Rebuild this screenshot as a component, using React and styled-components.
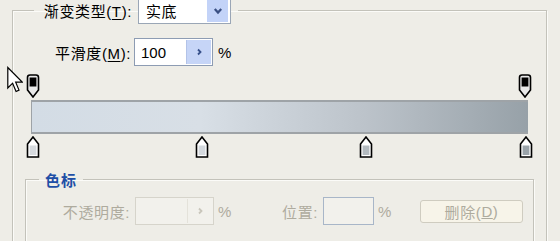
import styled, { createGlobalStyle } from "styled-components";

const Global = createGlobalStyle`
  html, body {
    margin: 0;
    padding: 0;
    background: #eeede7;
  }
  body {
    font-family: "Liberation Sans", "Noto Sans CJK SC", sans-serif;
    font-size: 15px;
    color: #000;
  }
`;

const Page = styled.div`
  position: relative;
  width: 560px;
  height: 241px;
  overflow: hidden;
  background: #eeede7;
`;

const Group = styled.fieldset`
  margin: ${(p) => p.$margin};
  padding: 0;
  min-width: 0;
  width: ${(p) => p.$width}px;
  height: ${(p) => p.$height}px;
  box-sizing: border-box;
  border: 1px solid #c3c2ba;
  box-shadow: inset 1px 1px 0 #fbfbf8, 1px 1px 0 #fbfbf8;
`;

const Legend = styled.legend`
  display: flex;
  align-items: center;
  gap: ${(p) => p.$gap || 0}px;
  margin-left: ${(p) => p.$offset}px;
  padding: 0 ${(p) => p.$pad}px;
  height: ${(p) => p.$h}px;
`;

const Label = styled.span`
  display: inline-block;
  width: ${(p) => (p.$width ? `${p.$width}px` : "auto")};
  margin-left: ${(p) => p.$ml || 0}px;
  text-align: right;
  font-size: 15px;
  letter-spacing: 0.6px;
  white-space: nowrap;
  color: ${(p) => (p.$disabled ? "#aeab9e" : "#000")};
  & u {
    text-decoration: underline;
    text-underline-offset: 2px;
  }
`;

const Title = styled.span`
  font-size: 15px;
  font-weight: 700;
  color: #1e4fa6;
  letter-spacing: 1px;
`;

const Select = styled.div`
  display: flex;
  align-items: center;
  justify-content: space-between;
  width: 93px;
  height: 27px;
  box-sizing: border-box;
  padding: 1px 2px 1px 7px;
  background: #fff;
  border: 1px solid #9aa6b6;
  letter-spacing: 0.6px;
`;

const SpinBox = styled.div`
  display: flex;
  align-items: stretch;
  width: ${(p) => p.$width}px;
  height: 28px;
  margin-left: ${(p) => p.$ml || 0}px;
  box-sizing: border-box;
  padding: 1px;
  background: ${(p) => (p.$disabled ? "#f2f1ec" : "#fff")};
  border: 1px solid ${(p) => p.$border || (p.$disabled ? "#d6d4cb" : "#8d9cb3")};
`;

const SpinValue = styled.span`
  flex: 1;
  display: flex;
  align-items: center;
  padding-left: 5px;
  font-size: 15px;
`;

const SpinButton = styled.span`
  display: flex;
  align-items: center;
  justify-content: center;
  width: 24px;
  background: ${(p) => (p.$disabled ? "#f2f1ec" : "#c6d5f7")};
  border-left: 1px solid ${(p) => (p.$disabled ? "#e4e2da" : "#b3c3e8")};
  color: ${(p) => (p.$disabled ? "#c9c6bb" : "#37508a")};
`;

const DropButton = styled.span`
  display: flex;
  align-items: center;
  justify-content: center;
  width: 21px;
  height: 23px;
  background: #c3d3f8;
  color: #3a4f82;
`;

const Row = styled.div`
  display: flex;
  align-items: center;
  margin: ${(p) => p.$margin};
`;

const Percent = styled.span`
  margin-left: ${(p) => p.$ml || 4}px;
  width: 14px;
  color: ${(p) => (p.$disabled ? "#aeab9e" : "#000")};
`;

const Editor = styled.div`
  display: flex;
  flex-direction: column;
  gap: 2px;
  margin: 8px 0 0 18px;
  width: 497px;
`;

const Track = styled.div`
  position: relative;
  height: ${(p) => p.$h}px;
`;

const StopHolder = styled.div`
  position: absolute;
  top: 0;
  width: 14px;
  height: 100%;
  margin-left: -7px;
`;

const Bar = styled.div`
  height: 34px;
  box-sizing: border-box;
  border: 1px solid #9ea3a7;
  border-top-width: 2px;
  border-bottom-width: 2px;
  border-right: none;
  background: linear-gradient(
    to right,
    #d3dce5 0%,
    #d8dfe6 34%,
    #bcc3ca 67%,
    #97a1a8 100%
  );
`;

const DeleteButton = styled.div`
  display: flex;
  align-items: center;
  justify-content: center;
  width: 103px;
  height: 23px;
  box-sizing: border-box;
  margin-left: 28px;
  background: #f7f4e9;
  border: 1px solid #cfccc0;
  border-radius: 3px;
  color: #aeab9e;
  letter-spacing: 0.6px;
`;

const Cursor = styled.svg`
  position: absolute;
  left: 7px;
  top: 66px;
`;

const TopStop = () => (
  <svg width="14" height="24" viewBox="0 0 14 24">
    <path
      d="M1.5 3.5 Q1.5 1 4 1 H10 Q12.5 1 12.5 3.5 V16 L7 23 L1.5 16 Z"
      fill="#e9e9e9"
      stroke="#000"
      strokeWidth="1.6"
    />
    <rect x="3.6" y="3.5" width="6.8" height="9" fill="#000" />
  </svg>
);

const BottomStop = ({ color }) => (
  <svg width="14" height="22" viewBox="0 0 14 22">
    <path
      d="M7 1 L12.5 8 V21 H1.5 V8 Z"
      fill="#fff"
      stroke="#000"
      strokeWidth="1.6"
    />
    <rect x="3.6" y="9.5" width="6.8" height="9.5" fill={color} />
  </svg>
);

const Chevron = ({ dir }) => (
  <svg width="10" height="10" viewBox="0 0 10 10">
    {dir === "down" ? (
      <path d="M1.8 3 L5 6.6 L8.2 3" fill="none" stroke="currentColor" strokeWidth="2.2" />
    ) : (
      <path d="M4 2.5 L6.5 5 L4 7.5" fill="none" stroke="currentColor" strokeWidth="1.8" />
    )}
  </svg>
);

const topStops = [2, 494];
const bottomStops = [
  { x: 2, color: "#d6dade" },
  { x: 171, color: "#d4d9de" },
  { x: 335, color: "#b3babf" },
  { x: 495, color: "#9aa3a9" },
];

export default function App() {
  return (
    <Page>
      <Global />
      <Group $margin="-3px 0 0 12px" $width={535} $height={260}>
        <Legend $offset={21} $pad={7} $h={27} $gap={6}>
          <Label $width={91}>
            渐变类型(<u>T</u>):
          </Label>
          <Select>
            <span>实底</span>
            <DropButton>
              <Chevron dir="down" />
            </DropButton>
          </Select>
        </Legend>

        <Row $margin="14px 0 0 0">
          <Label $width={78} $ml={40}>
            平滑度(<u>M</u>):
          </Label>
          <SpinBox $width={79} $ml={3}>
            <SpinValue>100</SpinValue>
            <SpinButton>
              <Chevron dir="right" />
            </SpinButton>
          </SpinBox>
          <Percent $ml={5}>%</Percent>
        </Row>

        <Editor>
          <Track $h={24}>
            {topStops.map((x) => (
              <StopHolder key={x} style={{ left: x }}>
                <TopStop />
              </StopHolder>
            ))}
          </Track>
          <Bar />
          <Track $h={22}>
            {bottomStops.map((s) => (
              <StopHolder key={s.x} style={{ left: s.x }}>
                <BottomStop color={s.color} />
              </StopHolder>
            ))}
          </Track>
        </Editor>

        <Group $margin="11px 0 0 12px" $width={509} $height={80}>
          <Legend $offset={13} $pad={6} $h={20}>
            <Title>色标</Title>
          </Legend>
          <Row $margin="8px 0 0 0">
            <Label $disabled $width={70} $ml={34}>
              不透明度:
            </Label>
            <SpinBox $width={79} $ml={5} $disabled>
              <SpinValue />
              <SpinButton $disabled>
                <Chevron dir="right" />
              </SpinButton>
            </SpinBox>
            <Percent $disabled>%</Percent>
            <Label $disabled $width={41} $ml={45}>
              位置:
            </Label>
            <SpinBox $width={51} $ml={5} $disabled $border="#a8b6c8">
              <SpinValue />
            </SpinBox>
            <Percent $disabled>%</Percent>
            <DeleteButton>
              删除(<u>D</u>)
            </DeleteButton>
          </Row>
        </Group>
      </Group>

      <Cursor width="16" height="28" viewBox="0 0 12 20">
        <path
          d="M0.6 0.6 V16 L4.2 12.4 L6.8 18.6 L9 17.6 L6.5 11.6 H11.4 Z"
          fill="#fff"
          stroke="#000"
          strokeWidth="0.9"
          strokeLinejoin="miter"
        />
      </Cursor>
    </Page>
  );
}
